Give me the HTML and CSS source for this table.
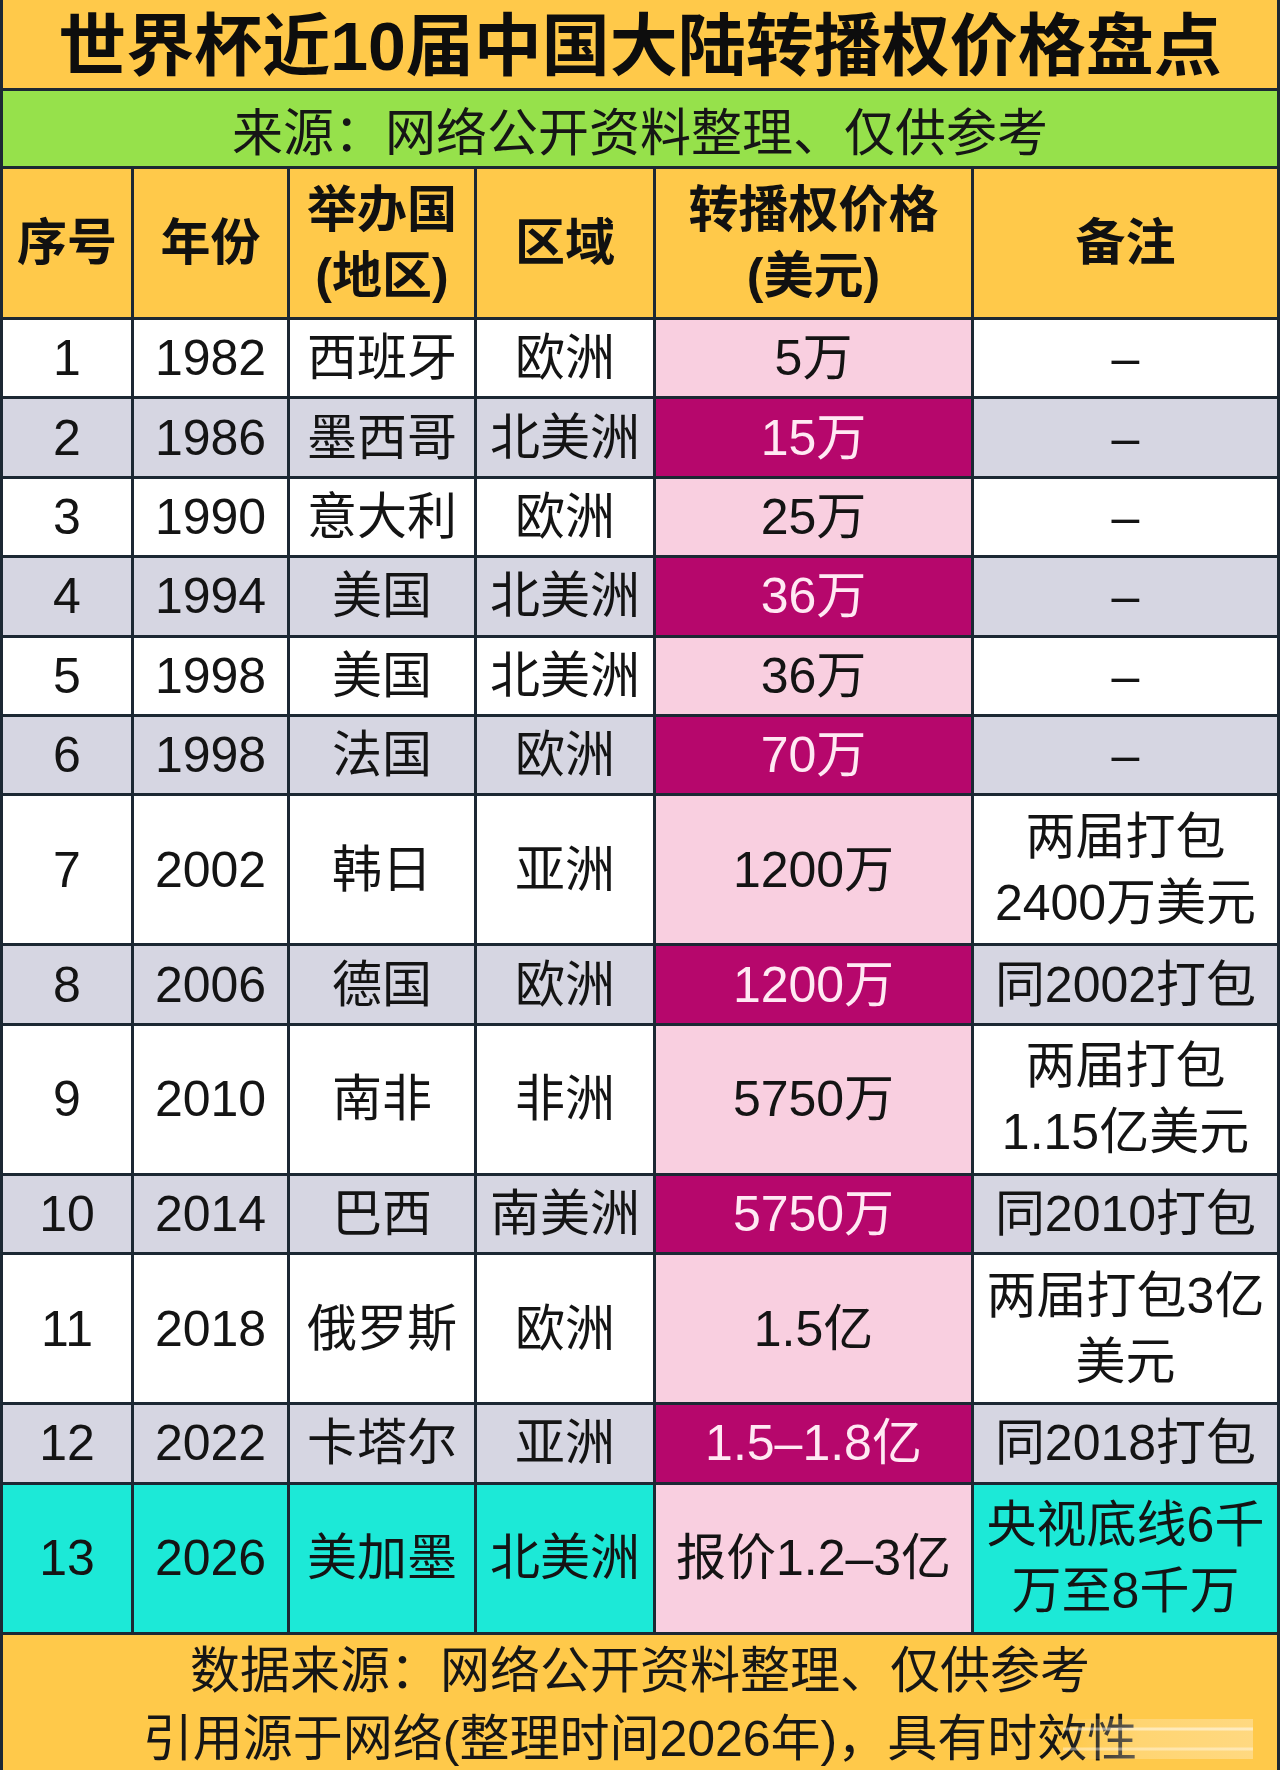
FILE: index.html
```html
<!DOCTYPE html>
<html lang="zh-CN">
<head>
<meta charset="utf-8">
<title>世界杯近10届中国大陆转播权价格盘点</title>
<link rel="stylesheet" href="styles.css">
</head>
<body>
<div class="sheet">
  <div class="title">世界杯近10届中国大陆转播权价格盘点</div>
  <div class="subtitle">来源：网络公开资料整理、仅供参考</div>
  <div class="grid">
    <div class="cell head">序号</div>
    <div class="cell head">年份</div>
    <div class="cell head">举办国<br>(地区)</div>
    <div class="cell head">区域</div>
    <div class="cell head">转播权价格<br>(美元)</div>
    <div class="cell head">备注</div>

    <div class="cell w">1</div><div class="cell w">1982</div><div class="cell w">西班牙</div><div class="cell w">欧洲</div><div class="cell pl">5万</div><div class="cell w">–</div>
    <div class="cell g">2</div><div class="cell g">1986</div><div class="cell g">墨西哥</div><div class="cell g">北美洲</div><div class="cell pd">15万</div><div class="cell g">–</div>
    <div class="cell w">3</div><div class="cell w">1990</div><div class="cell w">意大利</div><div class="cell w">欧洲</div><div class="cell pl">25万</div><div class="cell w">–</div>
    <div class="cell g">4</div><div class="cell g">1994</div><div class="cell g">美国</div><div class="cell g">北美洲</div><div class="cell pd">36万</div><div class="cell g">–</div>
    <div class="cell w">5</div><div class="cell w">1998</div><div class="cell w">美国</div><div class="cell w">北美洲</div><div class="cell pl">36万</div><div class="cell w">–</div>
    <div class="cell g">6</div><div class="cell g">1998</div><div class="cell g">法国</div><div class="cell g">欧洲</div><div class="cell pd">70万</div><div class="cell g">–</div>
    <div class="cell w">7</div><div class="cell w">2002</div><div class="cell w">韩日</div><div class="cell w">亚洲</div><div class="cell pl">1200万</div><div class="cell w">两届打包<br>2400万美元</div>
    <div class="cell g">8</div><div class="cell g">2006</div><div class="cell g">德国</div><div class="cell g">欧洲</div><div class="cell pd">1200万</div><div class="cell g">同2002打包</div>
    <div class="cell w">9</div><div class="cell w">2010</div><div class="cell w">南非</div><div class="cell w">非洲</div><div class="cell pl">5750万</div><div class="cell w">两届打包<br>1.15亿美元</div>
    <div class="cell g">10</div><div class="cell g">2014</div><div class="cell g">巴西</div><div class="cell g">南美洲</div><div class="cell pd">5750万</div><div class="cell g">同2010打包</div>
    <div class="cell w">11</div><div class="cell w">2018</div><div class="cell w">俄罗斯</div><div class="cell w">欧洲</div><div class="cell pl">1.5亿</div><div class="cell w">两届打包3亿<br>美元</div>
    <div class="cell g">12</div><div class="cell g">2022</div><div class="cell g">卡塔尔</div><div class="cell g">亚洲</div><div class="cell pd">1.5–1.8亿</div><div class="cell g">同2018打包</div>
    <div class="cell c">13</div><div class="cell c">2026</div><div class="cell c">美加墨</div><div class="cell c">北美洲</div><div class="cell pl">报价1.2–3亿</div><div class="cell c">央视底线6千<br>万至8千万</div>
  </div>
  <div class="footer">
    <div class="foot-line">数据来源：网络公开资料整理、仅供参考</div>
    <div class="foot-line">引用源于网络(整理时间2026年)，具有时效性</div>
    <div class="watermark"></div>
  </div>
</div>
</body>
</html>
```
FILE: styles.css
```css
html, body {
  margin: 0;
  padding: 0;
  background: #ffc94a;
}

body {
  font-family: "Liberation Sans", "Noto Sans CJK SC", sans-serif;
  color: #141414;
}

.sheet {
  width: 1280px;
  height: 1770px;
  box-sizing: border-box;
  padding: 0 3px;
  background: #1c2833;
  display: flex;
  flex-direction: column;
  gap: 3px;
  overflow: hidden;
}

.title {
  height: 88px;
  box-sizing: border-box;
  padding-bottom: 8px;
  flex: none;
  background: #ffc94a;
  display: flex;
  align-items: center;
  justify-content: center;
  font-size: 68px;
  font-weight: 700;
  color: #0d0d0d;
  white-space: nowrap;
}

.subtitle {
  height: 75px;
  flex: none;
  background: #96e14b;
  display: flex;
  align-items: center;
  justify-content: center;
  font-size: 51px;
  color: #161616;
  white-space: nowrap;
}

.grid {
  flex: none;
  display: grid;
  grid-template-columns: 128px 153px 184px 176px 315px 303px;
  grid-template-rows: 148px repeat(6, 76.4px) 147px 76.4px 147px 76.4px 147px 76.4px 147px;
  gap: 3px;
}

.cell {
  display: flex;
  align-items: center;
  justify-content: center;
  text-align: center;
  font-size: 50px;
  line-height: 66px;
  white-space: nowrap;
}

.head {
  background: #ffc94a;
  font-weight: 700;
  color: #111;
}

.w { background: #ffffff; }
.g { background: #d6d6e2; }
.c { background: #1ce9d7; }
.pl { background: #f9cfe0; }
.pd { background: #b6076c; color: #ffe9f3; }

.footer {
  flex: 1;
  background: #ffc94a;
  padding-top: 2px;
  position: relative;
}

.foot-line {
  height: 68px;
  line-height: 68px;
  font-size: 50px;
  text-align: center;
  white-space: nowrap;
  color: #161616;
}

.watermark {
  position: absolute;
  left: 1060px;
  top: 84px;
  width: 190px;
  height: 40px;
  background:
    linear-gradient(to bottom, transparent 0, transparent 8px, rgba(255,255,255,0.5) 9px, rgba(255,255,255,0.5) 11px, transparent 12px, transparent 28px, rgba(255,255,255,0.4) 29px, rgba(255,255,255,0.4) 31px, transparent 32px),
    linear-gradient(to right, rgba(255,235,190,0) 0, rgba(255,235,190,0.35) 40%, rgba(255,240,210,0.4) 100%);
}
```
